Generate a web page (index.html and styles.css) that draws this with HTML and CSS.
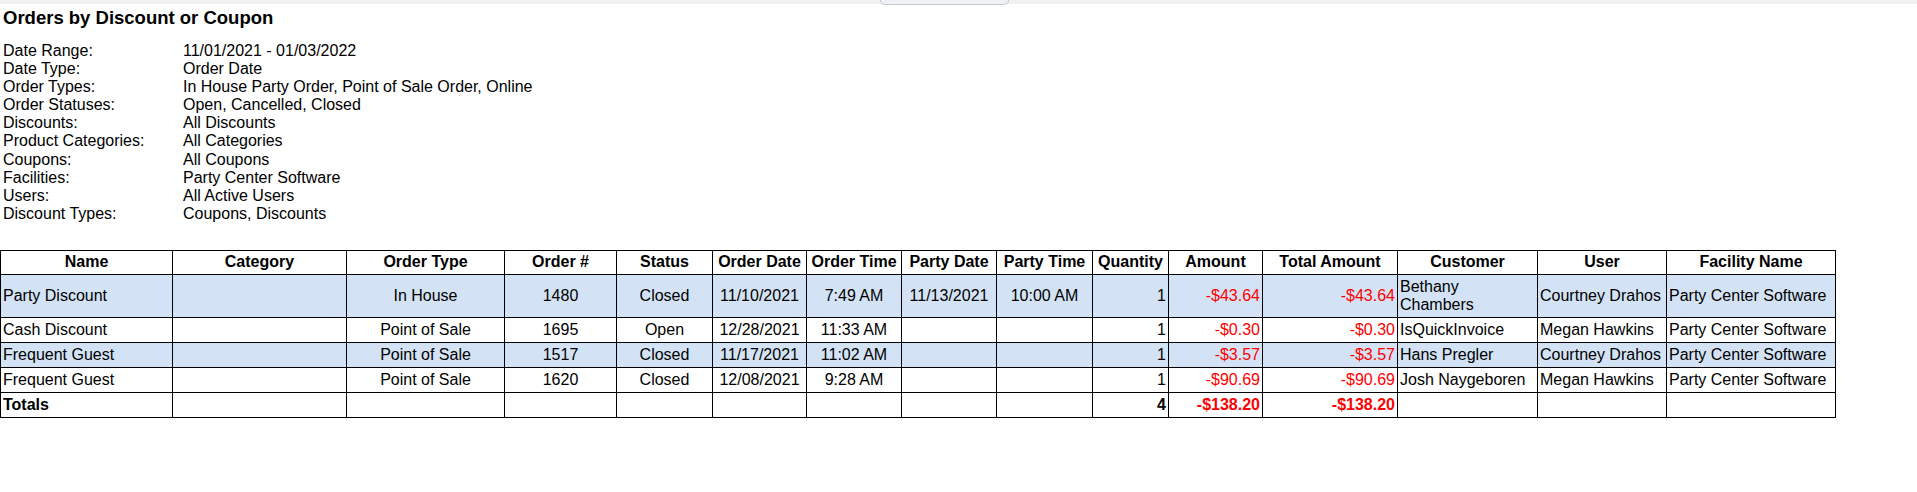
FILE: index.html
```html
<!DOCTYPE html>
<html>
<head>
<meta charset="utf-8">
<link rel="stylesheet" href="styles.css">
</head>
<body>
<div class="topbar"><div class="tab"></div></div>
<div class="report">
  <h1 class="title">Orders by Discount or Coupon</h1>
  <div class="criteria">
    <div class="crit-row"><span class="crit-label">Date Range:</span><span>11/01/2021 - 01/03/2022</span></div>
    <div class="crit-row"><span class="crit-label">Date Type:</span><span>Order Date</span></div>
    <div class="crit-row"><span class="crit-label">Order Types:</span><span>In House Party Order, Point of Sale Order, Online</span></div>
    <div class="crit-row"><span class="crit-label">Order Statuses:</span><span>Open, Cancelled, Closed</span></div>
    <div class="crit-row"><span class="crit-label">Discounts:</span><span>All Discounts</span></div>
    <div class="crit-row"><span class="crit-label">Product Categories:</span><span>All Categories</span></div>
    <div class="crit-row"><span class="crit-label">Coupons:</span><span>All Coupons</span></div>
    <div class="crit-row"><span class="crit-label">Facilities:</span><span>Party Center Software</span></div>
    <div class="crit-row"><span class="crit-label">Users:</span><span>All Active Users</span></div>
    <div class="crit-row"><span class="crit-label">Discount Types:</span><span>Coupons, Discounts</span></div>
  </div>
</div>
<table class="grid">
  <colgroup>
    <col class="c-name"><col class="c-cat"><col class="c-type"><col class="c-num"><col class="c-status">
    <col class="c-odate"><col class="c-otime"><col class="c-pdate"><col class="c-ptime"><col class="c-qty">
    <col class="c-amt"><col class="c-total"><col class="c-cust"><col class="c-user"><col class="c-fac">
  </colgroup>
  <thead>
    <tr>
      <th>Name</th><th>Category</th><th>Order Type</th><th>Order #</th><th>Status</th><th>Order Date</th><th>Order Time</th><th>Party Date</th><th>Party Time</th><th>Quantity</th><th>Amount</th><th>Total Amount</th><th>Customer</th><th>User</th><th>Facility Name</th>
    </tr>
  </thead>
  <tbody>
    <tr class="alt">
      <td>Party Discount</td><td></td><td class="ctr">In House</td><td class="ctr">1480</td><td class="ctr">Closed</td><td class="ctr">11/10/2021</td><td class="ctr">7:49 AM</td><td class="ctr">11/13/2021</td><td class="ctr">10:00 AM</td><td class="rt">1</td><td class="rt neg">-$43.64</td><td class="rt neg">-$43.64</td><td>Bethany Chambers</td><td>Courtney Drahos</td><td>Party Center Software</td>
    </tr>
    <tr>
      <td>Cash Discount</td><td></td><td class="ctr">Point of Sale</td><td class="ctr">1695</td><td class="ctr">Open</td><td class="ctr">12/28/2021</td><td class="ctr">11:33 AM</td><td class="ctr"></td><td class="ctr"></td><td class="rt">1</td><td class="rt neg">-$0.30</td><td class="rt neg">-$0.30</td><td>IsQuickInvoice</td><td>Megan Hawkins</td><td>Party Center Software</td>
    </tr>
    <tr class="alt">
      <td>Frequent Guest</td><td></td><td class="ctr">Point of Sale</td><td class="ctr">1517</td><td class="ctr">Closed</td><td class="ctr">11/17/2021</td><td class="ctr">11:02 AM</td><td class="ctr"></td><td class="ctr"></td><td class="rt">1</td><td class="rt neg">-$3.57</td><td class="rt neg">-$3.57</td><td>Hans Pregler</td><td>Courtney Drahos</td><td>Party Center Software</td>
    </tr>
    <tr>
      <td>Frequent Guest</td><td></td><td class="ctr">Point of Sale</td><td class="ctr">1620</td><td class="ctr">Closed</td><td class="ctr">12/08/2021</td><td class="ctr">9:28 AM</td><td class="ctr"></td><td class="ctr"></td><td class="rt">1</td><td class="rt neg">-$90.69</td><td class="rt neg">-$90.69</td><td>Josh Naygeboren</td><td>Megan Hawkins</td><td>Party Center Software</td>
    </tr>
  </tbody>
  <tfoot>
    <tr class="totals">
      <td>Totals</td><td></td><td></td><td></td><td></td><td></td><td></td><td></td><td></td><td class="rt">4</td><td class="rt neg">-$138.20</td><td class="rt neg">-$138.20</td><td></td><td></td><td></td>
    </tr>
  </tfoot>
</table>
</body>
</html>
```

FILE: styles.css
```css
html, body {
  margin: 0;
  padding: 0;
  background: #ffffff;
  color: #000000;
  font-family: "Liberation Sans", Arial, sans-serif;
}

.topbar {
  height: 4px;
  background: #f1f1f1;
  display: flex;
  align-items: flex-start;
  padding-left: 880px;
}

.tab {
  width: 127px;
  height: 4px;
  background: #eff1f4;
  border: 1px solid #c3c9d3;
  border-top: none;
  border-radius: 0 0 5px 5px;
}

.report {
  padding: 0 0 0 3px;
}

.title {
  margin: 3px 0 0 0;
  font-size: 18.5px;
  font-weight: bold;
  line-height: 21px;
}

.criteria {
  margin-top: 14px;
  font-size: 16px;
  line-height: 18.1px;
}

.crit-row {
  display: flex;
}

.crit-label {
  width: 180px;
  flex: none;
}

.grid {
  margin-top: 27px;
  border-collapse: collapse;
  table-layout: fixed;
  width: 1835px;
  font-size: 16px;
  line-height: 18px;
}

.grid th,
.grid td {
  border: 1px solid #000000;
  padding: 3px 2px 3px 2px;
  vertical-align: middle;
  text-align: left;
  overflow: hidden;
}

.grid th {
  text-align: center;
  font-weight: bold;
  padding: 2px 2px 3px 2px;
}

.grid .ctr { text-align: center; }
.grid .rt { text-align: right; }
.grid .neg { color: #ff0000; }

.grid tr.alt td { background: #d3e3f5; }

.grid tr.totals td { font-weight: bold; }

.c-name { width: 172px; }
.c-cat { width: 174px; }
.c-type { width: 158px; }
.c-num { width: 112px; }
.c-status { width: 96px; }
.c-odate { width: 94px; }
.c-otime { width: 95px; }
.c-pdate { width: 95px; }
.c-ptime { width: 96px; }
.c-qty { width: 76px; }
.c-amt { width: 94px; }
.c-total { width: 135px; }
.c-cust { width: 140px; }
.c-user { width: 129px; }
.c-fac { width: 169px; }
```
